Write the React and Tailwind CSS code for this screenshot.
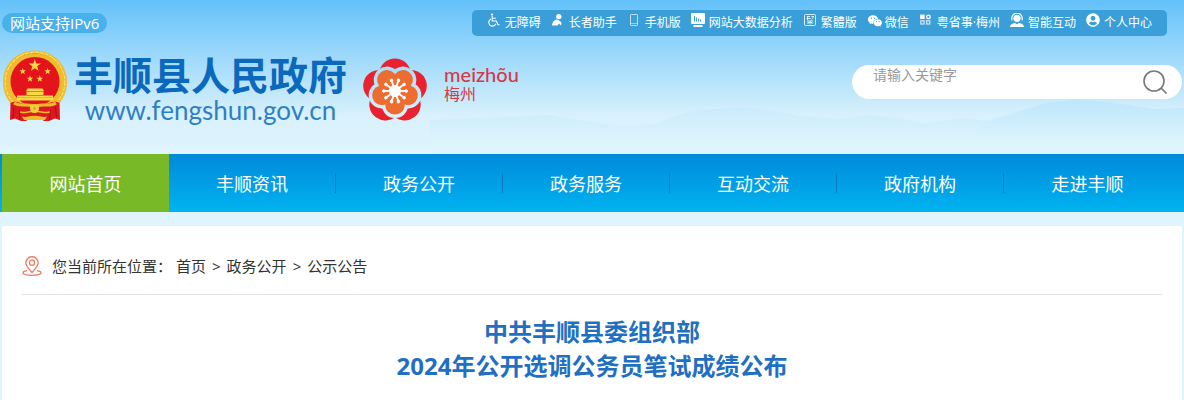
import { useState } from 'react';
import { FaUserCircle } from 'react-icons/fa';
import { AiFillWechat } from 'react-icons/ai';

const WheelchairIcon = () => (
  <svg viewBox="0 0 14 14" className="w-3.5 h-3.5" fill="none" stroke="currentColor" strokeWidth="1.1" aria-hidden="true">
    <circle cx="5" cy="1.6" r="1.1" fill="currentColor" stroke="none" />
    <path d="M5.2 3 V8 H9.3 L11 11.8 H12.5 M5.2 5.2 H8.8" />
    <path d="M4 6 A3.7 3.7 0 1 0 8.9 10.8" />
  </svg>
);

const ElderIcon = () => (
  <svg viewBox="0 0 14 14" className="w-3.5 h-3.5" fill="currentColor" aria-hidden="true">
    <circle cx="7.8" cy="3.6" r="2.7" />
    <path d="M5.5 6.3 L8 7.5 L10.5 9.5 L10 12.5 L8 10.5 L6.5 12.5 H0.8 C1.2 9.8 2.8 7 5.5 6.3 Z" />
  </svg>
);

const PhoneIcon = () => (
  <svg viewBox="0 0 14 14" className="w-3.5 h-3.5" fill="none" stroke="currentColor" aria-hidden="true">
    <rect x="3.5" y="1.5" width="7" height="11" rx="1" opacity="0.7" />
    <path d="M3.5 10.5 H10.5" opacity="0.5" />
  </svg>
);

const ChartIcon = () => (
  <svg viewBox="0 0 14 14" className="w-3.5 h-3.5" aria-hidden="true">
    <path d="M1 0 H13 Q14 0 14 1 V10 Q14 11 13 11 H1 Q0 11 0 10 V1 Q0 0 1 0 Z M2.5 12 H11.5 V14 H2.5 Z" fill="currentColor" />
    <path d="M3.5 3 V8.5 M5.5 4.5 V8.5 M7.5 5.5 V8.5 M9.5 6.5 V8.5" stroke="#3a9fd9" fill="none" />
  </svg>
);

const TraditionalIcon = () => (
  <svg viewBox="0 0 14 14" className="w-3.5 h-3.5" fill="none" stroke="currentColor" aria-hidden="true">
    <rect x="1.5" y="1.5" width="11" height="11" rx="1" opacity="0.8" />
    <path d="M4 3.5 H7 M3.5 5.5 H7.5 M4.5 3 V7 M8.5 3.5 H11 M8.5 6.5 L10.5 4 M4 8 H10 M4.5 9.5 H9.5 M7 8 V11.5 M4.5 11 L5.5 10 M9.5 11 L8.5 10" strokeWidth="0.8" />
  </svg>
);

const GridIcon = () => (
  <svg viewBox="0 0 14 14" className="w-3.5 h-3.5" fill="none" stroke="currentColor" strokeWidth="1.3" aria-hidden="true">
    <rect x="1.8" y="2.2" width="3.2" height="3.2" fill="currentColor" />
    <circle cx="9.4" cy="3.9" r="1.8" />
    <rect x="1.8" y="7.8" width="3.2" height="3.2" opacity="0.7" />
    <rect x="7.6" y="7.8" width="3.2" height="3.2" opacity="0.7" />
  </svg>
);

const ServiceIcon = () => (
  <svg viewBox="0 0 14 14" className="w-3.5 h-3.5" fill="currentColor" aria-hidden="true">
    <circle cx="7" cy="5.3" r="3.6" />
    <path d="M1.8 7.5 V5 A5.2 4.8 0 0 1 12.2 5 V7.5" fill="none" stroke="currentColor" strokeWidth="1.2" />
    <path d="M0 14 C0.3 11 3 10.2 5 9.9 L7 11.3 L9 9.9 C11 10.2 13.7 11 14 14 Z" />
  </svg>
);

const tools = [
  { label: '无障碍', icon: <WheelchairIcon /> },
  { label: '长者助手', icon: <ElderIcon /> },
  { label: '手机版', icon: <PhoneIcon /> },
  { label: '网站大数据分析', icon: <ChartIcon /> },
  { label: '繁體版', icon: <TraditionalIcon /> },
  { label: '微信', icon: <AiFillWechat className="w-4 h-4" /> },
  { label: '粤省事·梅州', icon: <GridIcon /> },
  { label: '智能互动', icon: <ServiceIcon /> },
  { label: '个人中心', icon: <FaUserCircle className="w-3.5 h-3.5" /> }
];

const navItems = ['网站首页', '丰顺资讯', '政务公开', '政务服务', '互动交流', '政府机构', '走进丰顺'];

const STAR = 'M0 -10 L2.3 -3.2 L9.5 -3.1 L3.8 1.2 L5.9 8.1 L0 4 L-5.9 8.1 L-3.8 1.2 L-9.5 -3.1 L-2.3 -3.2 Z';

const Emblem = () => (
  <svg viewBox="2 0 70 74" className="w-[70px] shrink-0" role="img" aria-label="国徽">
    <path d="M35 0.5 C53 0.5 67 14 67 32 C67 43 62 52 55 58 H15 C8 52 3 43 3 32 C3 14 17 0.5 35 0.5 Z" fill="#eebc2c" />
    <path d="M35 3.5 A28.5 28.5 0 0 0 11 49" fill="none" stroke="#d9a024" strokeWidth="1" strokeDasharray="3 2" />
    <path d="M35 3.5 A28.5 28.5 0 0 1 59 49" fill="none" stroke="#d9a024" strokeWidth="1" strokeDasharray="3 2" />
    <circle cx="35" cy="32" r="29.8" fill="none" stroke="#fbe26a" strokeWidth="1.2" strokeDasharray="4 1" />
    <circle cx="35" cy="31.5" r="24.5" fill="#e5141c" />
    <g fill="#f8d84a">
      <path d={STAR} transform="translate(34.8 15.6) scale(0.64)" />
      <path d={STAR} transform="translate(22.7 21.4) scale(0.35)" />
      <path d={STAR} transform="translate(47.6 21.4) scale(0.35)" />
      <path d={STAR} transform="translate(30 28.8) scale(0.35)" />
      <path d={STAR} transform="translate(39.8 28.8) scale(0.35)" />
      <path d="M27.5 38.5 H42.5 L44 41 H26 Z" />
      <path d="M26.5 41.5 H43.5 V45 H26.5 Z" />
      <path d="M17 45.5 H53 V50.5 H17 Z" />
    </g>
    <path d="M18 47.6 H52" stroke="#e0a526" strokeWidth="0.7" />
    <path d="M10.5 53 C15 50 20 53 25 54 H45 C50 53 55 50 59.5 53 L60 70 L55 68.5 L49 71 H44 L40 68 H30 L26 71 H21 L15 68.5 L10 70 Z" fill="#dd1820" />
    <path d="M14 53 C21 58 28 52 34.5 57 C41 52 49 58 56 53" fill="none" stroke="#eebc2c" strokeWidth="3" />
    <path d="M20 62 C26 64 30 60 34.5 62 C39 60 44 64 50 62" fill="none" stroke="#eebc2c" strokeWidth="1.6" />
    <circle cx="34.5" cy="58.5" r="4.6" fill="#f3cc3d" />
    <circle cx="34.5" cy="58.5" r="1.3" fill="#d9a024" />
    <path d="M22 66.5 C27 68 31 65 34.5 66 C38 65 42 68 47 66.5 L45 70 H24 Z" fill="#eebc2c" />
    <path d="M14 57 L13 68 M19 60 L20 70 M55.5 57 L56.5 68 M50.5 60 L49.5 70" stroke="#a60d14" strokeWidth="0.9" />
  </svg>
);

const petals = [0, 72, 144, 216, 288];
const stamens = [0, 36, 72, 108, 144, 180, 216, 252, 288, 324];

const PlumLogo = () => (
  <svg viewBox="-33 -33 66 66" className="w-[66px] shrink-0" role="img" aria-label="梅州">
    <mask id="plum-gap">
      <rect x="-33" y="-33" width="66" height="66" fill="#fff" />
      {petals.map((a) => (
        <circle key={a} cx="0" cy="13.8" r="13.2" transform={`rotate(${a})`} fill="#000" />
      ))}
    </mask>
    <g mask="url(#plum-gap)" fill="#e8222f">
      {petals.map((a) => (
        <circle key={a} cx="0" cy="-16.8" r="15.8" transform={`rotate(${a})`} />
      ))}
    </g>
    <g fill="#ed6c30">
      {petals.map((a) => (
        <circle key={a} cx="0" cy="13.8" r="9.8" transform={`rotate(${a})`} />
      ))}
      <circle r="14" />
    </g>
    <g fill="#fff" stroke="#fff">
      <circle r="5.5" />
      {stamens.map((a) => (
        <g key={a} transform={`rotate(${a + 18})`}>
          <path d="M0 0 V-10.5" strokeWidth="1.9" />
          <circle cx="0" cy="-11.2" r="1.3" />
        </g>
      ))}
    </g>
  </svg>
);

const Mountains = () => (
  <svg viewBox="0 0 1184 60" preserveAspectRatio="none" className="absolute inset-x-0 bottom-0 w-full h-[60px]" aria-hidden="true">
    <defs>
      <linearGradient id="hill" x1="0" y1="0" x2="0" y2="1">
        <stop offset="0" stopColor="#b8e4fb" />
        <stop offset="0.85" stopColor="#e0f5fd" />
      </linearGradient>
    </defs>
    <path d="M430 26 L500 23 L550 21 L585 27 L619 32 L655 30 L675 22 L700 16 L744 13 L785 19 L800 22 L840 25 L870 21 L900 24 L925 30 L960 24 L990 27 L1010 22 L1040 11 L1078 5 L1110 8 L1155 15 L1184 14 V60 H430 Z" fill="url(#hill)" opacity="0.5" />
    <path d="M985 27 L1010 20 L1045 9 L1078 5 L1110 9 L1155 15 L1184 14 V60 H960 Z" fill="url(#hill)" opacity="0.6" />
  </svg>
);

const LocationIcon = () => (
  <svg viewBox="0 0 20 20" className="w-5 h-5 shrink-0" fill="none" stroke="#f07a62" strokeWidth="1.3" aria-hidden="true">
    <path d="M10 16.5 C7 13 3.8 10 3.8 6.8 A6.2 6.2 0 0 1 16.2 6.8 C16.2 10 13 13 10 16.5 Z" />
    <circle cx="10" cy="6.8" r="2.6" />
    <path d="M5 14.6 C2.5 15 1 15.8 1 16.8 C1 18.4 5 19.3 10 19.3 C15 19.3 19 18.4 19 16.8 C19 15.8 17.5 15 15 14.6" />
  </svg>
);

export default function App() {
  const [keyword, setKeyword] = useState('');
  const [active, setActive] = useState(0);

  return (
    <div className="min-h-screen flex flex-col bg-[#dff4fd] font-['Open_Sans','Noto_Sans_CJK_SC',sans-serif]">
      <header className="relative bg-[linear-gradient(#63c1f9,#a3dbfb_40%,#d8f1fc_75%,#e0f5fd)] px-0.5 pb-[30px]">
        <Mountains />
        <div className="relative flex items-center justify-between pt-2.5 pr-[15px]">
          <a href="#" className="rounded-full bg-[#48b0ea] px-2 text-[15px] leading-5 text-white">网站支持IPv6</a>
          <ul className="flex gap-2.5 rounded-[5px] bg-[#3a9fd9] px-[15px] text-xs leading-[26px] text-white">
            {tools.map((tool) => (
              <li key={tool.label}>
                <a href="#" className="flex whitespace-nowrap">
                  <span className="w-[18px] pt-[3px]">{tool.icon}</span>
                  {tool.label}
                </a>
              </li>
            ))}
          </ul>
        </div>

        <div className="relative flex items-start justify-between pt-3.5">
          <div className="flex items-start">
            <Emblem />
            <div className="pl-0.5 text-center">
              <h1 className="text-[39px] leading-[50px] font-bold text-[#0a68bd]">丰顺县人民政府</h1>
              <p className="font-['Lato',sans-serif] text-[26px] leading-5 text-[#2f7fc6]">www.fengshun.gov.cn</p>
            </div>
            <div className="flex items-start gap-4 pl-[15px] pt-2">
              <PlumLogo />
              <div className="pt-1 text-[#d63848]">
                <p className="font-['Lato',sans-serif] text-xl leading-6 font-medium">meizhõu</p>
                <p className="text-base leading-4">梅州</p>
              </div>
            </div>
          </div>

          <form
            className="mt-[15px] flex w-[330px] items-start rounded-full bg-white pl-[21px] pr-[15px]"
            onSubmit={(e) => e.preventDefault()}
          >
            <input
              type="text"
              aria-label="请输入关键字"
              placeholder="请输入关键字"
              value={keyword}
              onChange={(e) => setKeyword(e.target.value)}
              className="min-w-0 flex-1 bg-transparent text-sm leading-5 text-gray-700 outline-none placeholder:text-[#999]"
            />
            <button type="submit" aria-label="搜索" className="py-[5px]">
              <svg viewBox="0 0 24 24" className="w-6 h-6" fill="none" stroke="#777" strokeWidth="1.6">
                <circle cx="11" cy="11" r="10" />
                <path d="M18 18 L23.5 23.5" />
              </svg>
            </button>
          </form>
        </div>
      </header>

      <nav className="bg-linear-to-b from-[#008ada] to-[#00b3f0] pl-0.5 pr-[13px]">
        <ul className="flex">
          {navItems.map((item, i) => (
            <li key={item} className="flex flex-1 items-center">
              <a
                href="#"
                onClick={() => setActive(i)}
                className={`flex-1 pt-[17px] pb-[15px] text-center text-lg leading-[26px] text-white ${i === active ? 'bg-[#78b928]' : ''}`}
              >
                {item}
              </a>
              {i > 0 && i < navItems.length - 1 && <span className="h-5 w-px bg-[#0a7cc4]" />}
            </li>
          ))}
        </ul>
      </nav>

      <main className="mx-0.5 mt-3.5 flex-1 bg-white px-5">
        <div className="flex items-center gap-2.5 border-b border-[#e5e5e5] pt-[30px] pb-[18px] text-[15px] leading-5 text-[#333]">
          <LocationIcon />
          <div className="flex gap-1">
            <span>您当前所在位置：</span>
            <div className="flex gap-1.5">
              <a href="#">首页</a>
              <span>&gt;</span>
              <a href="#">政务公开</a>
              <span>&gt;</span>
              <a href="#">公示公告</a>
            </div>
          </div>
        </div>
        <h2 className="pt-5 text-center text-2xl leading-[34px] font-bold text-[#1f6fc2]">
          中共丰顺县委组织部
          <br />
          2024年公开选调公务员笔试成绩公布
        </h2>
      </main>
    </div>
  );
}
